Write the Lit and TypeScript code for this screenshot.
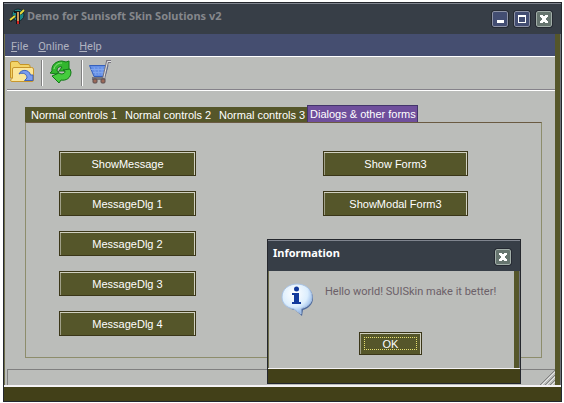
import { LitElement, html, css, svg } from "lit";
import { customElement } from "lit/decorators.js";

const appIcon = svg`
  <circle cx="9" cy="7" r="6" fill="#1d8586" stroke="#16282e"></circle>
  <path d="M1 13 L6 8 M11 6 L15 2" fill="none" stroke="#14181a" stroke-width="3"></path>
  <path d="M1 12 L6 8 M11 6 L15 2" stroke="#e6dc3c" stroke-width="2"></path>
  <path d="M5 3 H11 V16 H7 V5 H5 Z" fill="#14181a"></path>
  <path d="M9 4 V13" stroke="#c89a5c" stroke-width="2"></path>
  <path d="M9 13 V16" stroke="#d02020" stroke-width="2"></path>`;

const folderIcon = svg`
  <path d="M1.5 3 Q1.5 1.5 3 1.5 H9 L11 4.5 H19 Q21 4.5 21 6 V18 H1.5 Z" fill="#f3d468" stroke="#c49426"></path>
  <path d="M3.5 9 Q3.5 7.5 5 7.5 H22.5 Q24.5 7.5 24.5 9 V20 Q24.5 21.5 23 21.5 H3 Q1.5 21.5 1.5 20 L3.5 18 Z" fill="#fbe69a" stroke="#c8962c"></path>
  <path d="M10 14 C12 9 20 9 21.5 15 H24 V20.5 H15.5 L18 18 C18 14 14 12 10 14 Z" fill="#7b9df0" stroke="#3f62b8"></path>`;

const refreshIcon = svg`
  <path d="M1 13 L3 11 C2 5 7 1 13 1 L17 2 L20 1 V11 H10 L13 7 C10 6 8 8 8 11 L10 12 L7 14 Z" fill="#32b62e" stroke="#117a16"></path>
  <path d="M21 9 L22 12 C22 18 17 21 12 20 L10 23 L3 16 L10 13 L12 14 C15 14 16 13 16 11 L14 10 Z" fill="#45cc3e" stroke="#117a16"></path>
  <path d="M5 9 C6 5 9 3 13 3" fill="none" stroke="#8be47c"></path>`;

const cartIcon = svg`
  <path d="M0.5 5.5 H19 L16 16.5 H5 Z" fill="#6690e6" stroke="#3560bc"></path>
  <path d="M5 7 L7 15 M9 7 L10 15 M13 7 V15 M2 9.5 H18 M4 12.5 H17" stroke="#7fa5ee" fill="none"></path>
  <path d="M22 1.5 H18.5 L15 17 V18.5 H3" fill="none" stroke="#77757d" stroke-width="3"></path>
  <path d="M22 1.5 H18.5 L15 17 V18" fill="none" stroke="#e4e4e8"></path>
  <rect x="4" y="19" width="4" height="4" rx="1" fill="#9c6a58" stroke="#5c4f50"></rect>
  <rect x="12" y="19" width="4" height="4" rx="1" fill="#9c6a58" stroke="#5c4f50"></rect>`;

const infoIcon = svg`
  <defs>
    <radialGradient id="bubble" cx="42%" cy="32%" r="72%">
      <stop offset="0" stop-color="#ffffff"></stop>
      <stop offset="0.6" stop-color="#dceefd"></stop>
      <stop offset="1" stop-color="#7fa8e2"></stop>
    </radialGradient>
  </defs>
  <path d="M17 2 C25 2 32 7 32 15 C32 21 28 25 22 27 L21 33 L14 27 C7 26 3 21 3 15 C3 7 9 2 17 2 Z" fill="#4f6a9c"></path>
  <path d="M16 1 C24 1 31 6 31 14 C31 20 27 24 20 25.5 L20 31 L13 26 C5 25 1 20 1 14 C1 6 8 1 16 1 Z" fill="url(#bubble)" stroke="#a9c3e4"></path>
  <circle cx="15.5" cy="6" r="2.5" fill="#123a9c"></circle>
  <path d="M11 10 H18 V19 H20 V21 H11 V19 H13 V12 H11 Z" fill="#123a9c"></path>`;

const minGlyph = svg`<path d="M4 8 H11 V11 H4 Z" fill="#fff"></path>`;
const maxGlyph = svg`<path d="M3 3 H11 V11 H3 Z M4 5 V10 H10 V5 Z" fill="#fff" fill-rule="evenodd"></path>`;
const closeGlyph = svg`<path d="M3 3 H6 V4 H8 V3 H11 V5 H10 V6 H9 V8 H10 V9 H11 V11 H8 V10 H6 V11 H3 V9 H4 V8 H5 V6 H4 V5 H3 Z" fill="#fff"></path>`;

const box = (label: string, glyph: unknown, kind = "") => html`
  <button class="box ${kind}" aria-label=${label}><svg width="14" height="14">${glyph}</svg></button>
`;

@customElement("app-root")
export class AppRoot extends LitElement {
  static styles = css`
    :host {
      display: block;
      min-height: 100vh;
      box-sizing: border-box;
      padding: 2px 2px 1px 3px;
      background: #fff;
      font: 11px/14px "Liberation Sans", Arial, sans-serif;
      color: #fff;
    }
    * { box-sizing: border-box; }
    button { font: inherit; color: inherit; margin: 0; padding: 0; }
    svg { flex: none; display: block; }
    .window {
      position: relative;
      display: flex;
      flex-direction: column;
      min-height: calc(100vh - 3px);
      border: 1px solid #24272d;
      background: #70737a;
    }
    .title {
      display: flex;
      align-items: flex-start;
      height: 31px;
      padding: 4px 9px 0 5px;
      border-top: 1px solid #80858f;
      background: #373e47;
    }
    .title h1 {
      flex: 1;
      margin: 0;
      font: bold 11px/16px "Noto Sans", Tahoma, sans-serif;
      color: #85878c;
    }
    .title > svg { margin-right: 1px; }
    .boxes { display: flex; gap: 6px; margin-top: 3px; }
    .box {
      display: block;
      width: 16px;
      height: 16px;
      border: 1px solid #8e93a6;
      border-radius: 2px;
      outline: 1px solid #262a33;
      background: #434d72;
    }
    .box.close { background: #66756f; border-color: #a3afaa; }
    .body {
      flex: 1;
      display: flex;
      flex-direction: column;
      margin-right: 1px;
      border-right: 5px solid #55562a;
      border-left: 1px solid #6c6c4a;
      background: #bbbdba;
    }
    .menu {
      display: flex;
      gap: 10px;
      height: 23px;
      padding: 6px 6px 0;
      border-bottom: 1px solid #fff;
      background: #454e70;
      font-family: Roboto, "Liberation Sans", sans-serif;
    }
    .menu a { color: #b0b3c0; text-decoration: none; }
    .tools {
      display: flex;
      gap: 6px;
      height: 34px;
      margin-left: 2px;
      padding: 3px 2px 0;
      border-bottom: 1px solid #fff;
      box-shadow: inset 0 -1px #85828a;
    }
    .tool { display: flex; border: 0; background: none; }
    .sep { width: 2px; height: 26px; background: #808080; border-right: 1px solid #fff; }
    .tabs { margin: 14px 13px 0 20px; }
    .strip { display: flex; align-items: flex-end; }
    .tab {
      width: 94px;
      height: 15px;
      padding-left: 6px;
      border: 0;
      background: #55562a;
      text-align: left;
      white-space: nowrap;
    }
    .tab.on {
      width: 111px;
      height: 17px;
      padding-left: 2px;
      border: 1px solid #43356b;
      border-bottom: 0;
      background: #6f4f9c;
    }
    .panel {
      display: flex;
      gap: 127px;
      min-height: 236px;
      padding: 28px 33px 0;
      border: 1px solid #8d8d6c;
      border-top-color: #6a5a42;
    }
    .col { display: flex; flex-direction: column; gap: 15px; width: 137px; }
    .col.wide { width: 145px; }
    .push {
      flex: none;
      height: 25px;
      padding-top: 1px;
      border: 1px solid #3a3618;
      background: #55562a;
      box-shadow: inset 0 1px #d0d0c0, inset 1px 0 #a0a088, inset -1px 0 #d0d0c0;
    }
    .status {
      display: flex;
      justify-content: flex-end;
      align-items: flex-end;
      height: 16px;
      margin: 11px 0 0 2px;
      border: 1px solid #808080;
      border-width: 1px 0 0 1px;
    }
    .foot { height: 16px; border-top: 2px solid #f4f2f4; background: #424018; }
    .dialog {
      position: absolute;
      top: 236px;
      left: 263px;
      width: 254px;
      border: 1px solid #24272d;
      background: #70737a;
    }
    .dialog .box { margin-top: 4px; }
    .dialog .title h1 { color: #fff; }
    .dialog .body { height: 97px; padding: 12px 14px 0 12px; }
    .dialog .foot { height: 15px; border-top-width: 1px; }
    .msg { display: flex; gap: 10px; height: 49px; }
    .msg p {
      margin: 0;
      padding-top: 2px;
      color: #6b6068;
      font-family: Roboto, "Liberation Sans", sans-serif;
      white-space: nowrap;
    }
    .ok {
      align-self: center;
      width: 63px;
      height: 23px;
      outline: 1px dotted #e6e070;
      outline-offset: -6px;
    }
  `;

  render() {
    return html`
      <main class="window">
        <header class="title">
          <svg width="17" height="17">${appIcon}</svg>
          <h1>Demo for Sunisoft Skin Solutions v2</h1>
          <div class="boxes">
            ${box("Minimize", minGlyph)}${box("Maximize", maxGlyph)}${box("Close", closeGlyph, "close")}
          </div>
        </header>
        <div class="body">
          <nav class="menu">
            <a href="#file"><u>F</u>ile</a><a href="#online"><u>O</u>nline</a><a href="#help"><u>H</u>elp</a>
          </nav>
          <div class="tools">
            <button class="tool" aria-label="Open"><svg width="26" height="24">${folderIcon}</svg></button>
            <span class="sep"></span>
            <button class="tool" aria-label="Refresh"><svg width="26" height="24">${refreshIcon}</svg></button>
            <span class="sep"></span>
            <button class="tool" aria-label="Cart"><svg width="24" height="24">${cartIcon}</svg></button>
          </div>
          <section class="tabs">
            <div class="strip" role="tablist">
              ${[1, 2, 3].map((n) => html`<button class="tab" role="tab">Normal controls ${n}</button>`)}
              <button class="tab on" role="tab" aria-selected="true">Dialogs &amp; other forms</button>
            </div>
            <div class="panel">
              <div class="col">
                <button class="push">ShowMessage</button>
                ${[1, 2, 3, 4].map((n) => html`<button class="push">MessageDlg ${n}</button>`)}
              </div>
              <div class="col wide">
                <button class="push">Show Form3</button>
                <button class="push">ShowModal Form3</button>
              </div>
            </div>
          </section>
          <footer class="status">
            <svg width="15" height="15">
              <path d="M0 15 L15 0 M5 15 L15 5 M10 15 L15 10" stroke="#808080"></path>
              <path d="M2 15 L15 2 M7 15 L15 7 M12 15 L15 12" stroke="#e8e8e8"></path>
            </svg>
          </footer>
        </div>
        <div class="foot"></div>
        <section class="dialog" role="dialog" aria-label="Information">
          <header class="title">
            <h1>Information</h1>
            ${box("Close", closeGlyph, "close")}
          </header>
          <div class="body">
            <div class="msg">
              <svg width="34" height="34">${infoIcon}</svg>
              <p>Hello world! SUISkin make it better!</p>
            </div>
            <button class="push ok">OK</button>
          </div>
          <div class="foot"></div>
        </section>
      </main>
    `;
  }
}
